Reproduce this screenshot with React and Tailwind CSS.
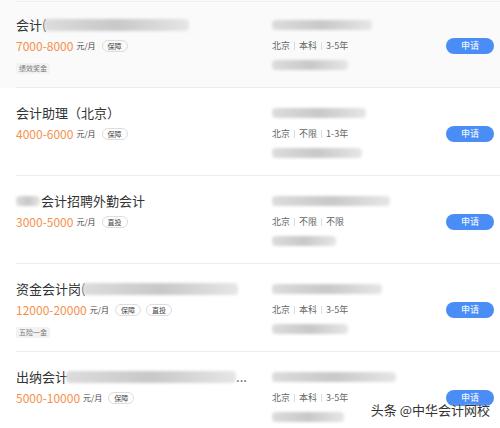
import React from 'react';

const jobs = [
  {
    title: '会计(',
    titleBlur: 'w-[145px]',
    salary: '7000-8000',
    tags: ['保障'],
    perks: ['绩效奖金'],
    info: ['北京', '本科', '3-5年'],
    companyBlur: 'w-[100px]',
    addrBlur: 'w-[76px]',
    bg: 'bg-[#fafafa]',
  },
  {
    title: '会计助理（北京）',
    salary: '4000-6000',
    tags: ['保障'],
    perks: [],
    info: ['北京', '不限', '1-3年'],
    companyBlur: 'w-[94px]',
    addrBlur: 'w-[90px]',
  },
  {
    titlePre: true,
    title: '会计招聘外勤会计',
    salary: '3000-5000',
    tags: ['直投'],
    perks: [],
    info: ['北京', '不限', '不限'],
    companyBlur: 'w-[118px]',
    addrBlur: 'w-[64px]',
  },
  {
    title: '资金会计岗(',
    titleBlur: 'w-[155px]',
    salary: '12000-20000',
    tags: ['保障', '直投'],
    perks: ['五险一金'],
    info: ['北京', '本科', '3-5年'],
    companyBlur: 'w-[110px]',
    addrBlur: 'w-[76px]',
  },
  {
    title: '出纳会计',
    titleBlur: 'w-[170px]',
    titleEnd: '...',
    salary: '5000-10000',
    tags: ['保障'],
    perks: [],
    info: ['北京', '本科', '3-5年'],
    companyBlur: 'w-[124px]',
    addrBlur: 'w-[72px]',
  },
];

const Blur = ({ className }) => (
  <span
    className={`inline-block h-[10px] rounded-sm bg-gradient-to-r from-[#dcdcdc] via-[#c8c8c8] to-[#e6e6e6] blur-[1.5px] ${className}`}
  />
);

const JobRow = ({ job }) => (
  <div className={`relative flex items-start h-[88px] ${job.bg || 'bg-white'}`}>
    <div className="w-[272px] pl-4 pt-[17px]">
      <div className="flex items-center text-[13px] leading-[16px] text-[#333]">
        {job.titlePre && <Blur className="w-[24px] mr-[1px]" />}
        <span>{job.title}</span>
        {job.titleBlur && <Blur className={`${job.titleBlur} h-[12px] -ml-[2px]`} />}
        {job.titleEnd && <span className="text-[#555]">{job.titleEnd}</span>}
      </div>
      <div className="mt-[6px] flex items-center gap-[3px]">
        <span className="text-[12px] leading-[14px] text-[#f5904a]">{job.salary}</span>
        <span className="text-[8px] leading-[12px] text-[#444] mr-[3px]">元/月</span>
        {job.tags.map((t) => (
          <span
            key={t}
            className="rounded-full border border-[#ddd] px-[5px] text-[7px] leading-[10px] text-[#444] mr-[2px]"
          >
            {t}
          </span>
        ))}
      </div>
      {job.perks.length > 0 && (
        <div className="mt-[10px] flex">
          {job.perks.map((p) => (
            <span
              key={p}
              className="rounded-[2px] bg-[#f2f2f2] px-[3px] text-[7px] leading-[11px] text-[#777]"
            >
              {p}
            </span>
          ))}
        </div>
      )}
    </div>
    <div className="flex-1 pt-[20px]">
      <div className="flex h-[10px] items-center">
        <Blur className={job.companyBlur} />
      </div>
      <div className="mt-[10px] flex items-center text-[9px] leading-[12px] text-[#666]">
        {job.info.map((s, i) => (
          <React.Fragment key={i}>
            {i > 0 && <span className="mx-[4px] h-[8px] w-px bg-[#ddd]" />}
            <span>{s}</span>
          </React.Fragment>
        ))}
      </div>
      <div className="mt-[8px] flex h-[10px] items-center">
        <Blur className={job.addrBlur} />
      </div>
    </div>
    <div className="flex pr-[6px] pt-[38px]">
      <button className="block h-[16px] w-[48px] rounded-full bg-[#4a8df6] text-[9px] leading-[16px] text-white">
        申请
      </button>
    </div>
    <div className="absolute bottom-0 left-4 right-0 h-px bg-[#ececec]" />
  </div>
);

const App = () => {
  return (
    <div
      className="relative h-[428px] w-[500px] overflow-hidden bg-white"
      style={{ fontFamily: '"Noto Sans CJK SC", "Noto Sans", sans-serif' }}
    >
      <div className="absolute top-[1px] left-4 right-0 h-px bg-[#efefef] z-10" />
      {jobs.map((job, i) => (
        <JobRow key={i} job={job} />
      ))}
      <div className="absolute right-[10px] top-[402px] text-[13px] leading-[16px] text-[#333] [text-shadow:0_0_2px_#fff]">
        头条 @中华会计网校
      </div>
    </div>
  );
};

export default App;
